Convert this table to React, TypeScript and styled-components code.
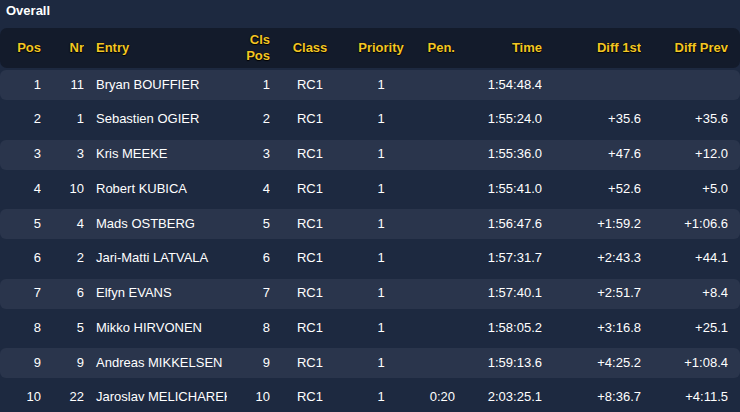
import styled, { createGlobalStyle } from "styled-components";

const GlobalStyle = createGlobalStyle`
  html, body {
    margin: 0;
    padding: 0;
    background: #1d2940;
  }
  body {
    font-family: "Liberation Sans", Arial, sans-serif;
    font-size: 13px;
    color: #ffffff;
  }
`;

type Align = "left" | "right" | "center";

interface Column {
  key: string;
  label: string[];
  width: number;
  align: Align;
  pad?: number;
}

const COLUMNS: Column[] = [
  { key: "pos", label: ["Pos"], width: 41, align: "right" },
  { key: "nr", label: ["Nr"], width: 43, align: "right" },
  { key: "entry", label: ["Entry"], width: 143, align: "left", pad: 12 },
  { key: "cls", label: ["Cls", "Pos"], width: 43, align: "right" },
  { key: "class", label: ["Class"], width: 80, align: "center" },
  { key: "priority", label: ["Priority"], width: 62, align: "center" },
  { key: "pen", label: ["Pen."], width: 43, align: "right" },
  { key: "time", label: ["Time"], width: 87, align: "right" },
  { key: "diff1", label: ["Diff 1st"], width: 99, align: "right" },
  { key: "diffPrev", label: ["Diff Prev"], width: 87, align: "right" },
];

const ROWS = [
  ["1", "11", "Bryan BOUFFIER", "1", "RC1", "1", "", "1:54:48.4", "", ""],
  ["2", "1", "Sebastien OGIER", "2", "RC1", "1", "", "1:55:24.0", "+35.6", "+35.6"],
  ["3", "3", "Kris MEEKE", "3", "RC1", "1", "", "1:55:36.0", "+47.6", "+12.0"],
  ["4", "10", "Robert KUBICA", "4", "RC1", "1", "", "1:55:41.0", "+52.6", "+5.0"],
  ["5", "4", "Mads OSTBERG", "5", "RC1", "1", "", "1:56:47.6", "+1:59.2", "+1:06.6"],
  ["6", "2", "Jari-Matti LATVALA", "6", "RC1", "1", "", "1:57:31.7", "+2:43.3", "+44.1"],
  ["7", "6", "Elfyn EVANS", "7", "RC1", "1", "", "1:57:40.1", "+2:51.7", "+8.4"],
  ["8", "5", "Mikko HIRVONEN", "8", "RC1", "1", "", "1:58:05.2", "+3:16.8", "+25.1"],
  ["9", "9", "Andreas MIKKELSEN", "9", "RC1", "1", "", "1:59:13.6", "+4:25.2", "+1:08.4"],
  ["10", "22", "Jaroslav MELICHAREK", "10", "RC1", "1", "0:20", "2:03:25.1", "+8:36.7", "+4:11.5"],
];

const template = COLUMNS.map((c) => `${c.width}px`).join(" ") + " 1fr";

const Page = styled.div`
  width: 740px;
  height: 412px;
  overflow: hidden;
`;

const Title = styled.div`
  height: 28px;
  padding: 3px 0 0 6px;
  box-sizing: border-box;
  font-weight: bold;
  line-height: 16px;
`;

const Table = styled.div`
  display: flex;
  flex-direction: column;
  gap: 4.75px;
`;

const Row = styled.div<{ $striped?: boolean }>`
  display: grid;
  grid-template-columns: ${template};
  align-items: center;
  height: 30px;
  padding-bottom: 1px;
  box-sizing: border-box;
  border-radius: 6px;
  background: ${({ $striped }) => ($striped ? "#2a354c" : "transparent")};
`;

const HeaderRow = styled(Row)`
  height: 40px;
  margin-bottom: -2.75px;
  background: #131b2b;
  border-radius: 7px;
`;

const Cell = styled.div<{ $align: Align; $pad?: number }>`
  text-align: ${({ $align }) => $align};
  padding-left: ${({ $pad }) => $pad ?? 0}px;
  white-space: nowrap;
  overflow: hidden;
  line-height: 16px;
`;

const HeadCell = styled(Cell)`
  color: #f3c623;
  font-weight: bold;
  text-shadow: 0 0 1px #000, 0 1px 1px #000;
`;

export default function App() {
  return (
    <Page>
      <GlobalStyle />
      <Title>Overall</Title>
      <Table>
        <HeaderRow>
          {COLUMNS.map((c) => (
            <HeadCell key={c.key} $align={c.align} $pad={c.pad}>
              {c.label.map((l, i) => (
                <div key={i}>{l}</div>
              ))}
            </HeadCell>
          ))}
        </HeaderRow>
        {ROWS.map((r, ri) => (
          <Row key={ri} $striped={ri % 2 === 0}>
            {r.map((v, ci) => (
              <Cell key={ci} $align={COLUMNS[ci].align} $pad={COLUMNS[ci].pad}>
                {v}
              </Cell>
            ))}
          </Row>
        ))}
      </Table>
    </Page>
  );
}
